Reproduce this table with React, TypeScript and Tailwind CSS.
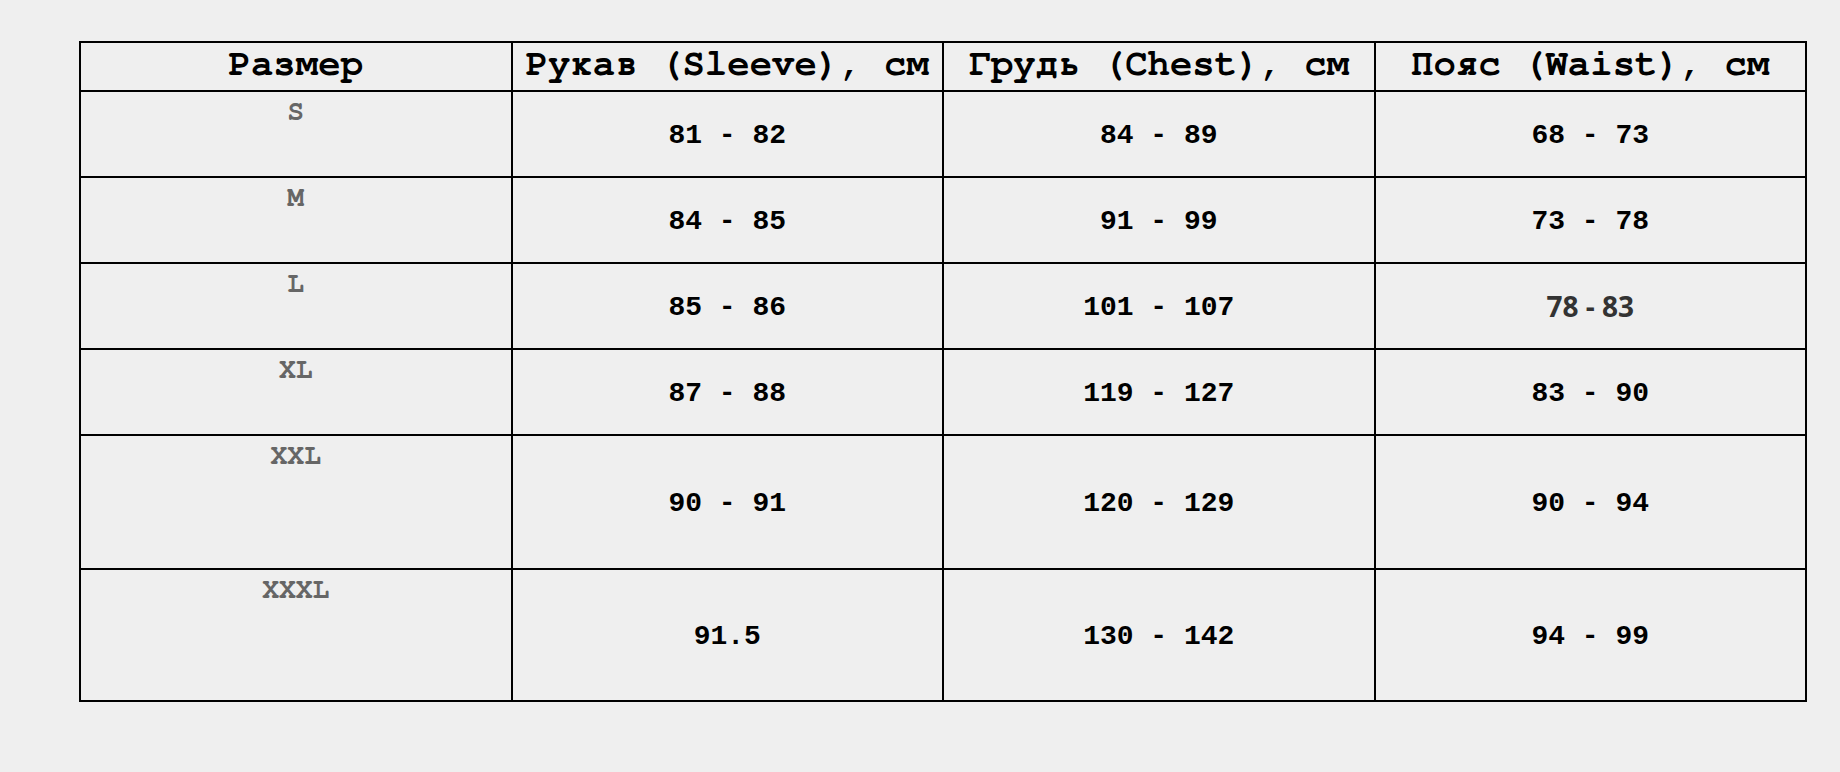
import React from "react";

const rows = [
  { size: "S", sleeve: "81 - 82", chest: "84 - 89", waist: "68 - 73", h: "h-[86px]" },
  { size: "M", sleeve: "84 - 85", chest: "91 - 99", waist: "73 - 78", h: "h-[86px]" },
  { size: "L", sleeve: "85 - 86", chest: "101 - 107", waist: "78 - 83", h: "h-[86px]", alt: true },
  { size: "XL", sleeve: "87 - 88", chest: "119 - 127", waist: "83 - 90", h: "h-[86px]" },
  { size: "XXL", sleeve: "90 - 91", chest: "120 - 129", waist: "90 - 94", h: "h-[134px]" },
  { size: "XXXL", sleeve: "91.5", chest: "130 - 142", waist: "94 - 99", h: "h-[132px]" },
];

export default function App() {
  return (
    <div className="min-h-[772px] w-[1840px] bg-[#efefef] pl-[79px] pt-[41px]">
      <table className="w-[1728px] table-fixed border-separate border-spacing-0 border border-black">
        <thead>
          <tr>
            {["Размер", "Рукав (Sleeve), см", "Грудь (Chest), см", "Пояс (Waist), см"].map((t) => (
              <th
                key={t}
                className="h-[49px] w-1/4 border border-black p-0 pb-[5px] text-center align-middle font-['FreeMono','Liberation_Mono',monospace] text-[37.33px] font-bold leading-none text-black whitespace-pre"
              >
                {t}
              </th>
            ))}
          </tr>
        </thead>
        <tbody>
          {rows.map((r) => (
            <tr key={r.size}>
              <td
                className={`${r.h} border border-black p-0 pt-[6px] text-center align-top font-['FreeMono','Liberation_Mono',monospace] text-[28px] font-bold leading-none text-[#666666]`}
              >
                {r.size}
              </td>
              <td className={`${r.h} border border-black p-0 pt-[4px] text-center align-middle font-['Liberation_Mono',monospace] text-[28px] font-bold leading-none text-black whitespace-pre`}>
                {r.sleeve}
              </td>
              <td className={`${r.h} border border-black p-0 pt-[4px] text-center align-middle font-['Liberation_Mono',monospace] text-[28px] font-bold leading-none text-black whitespace-pre`}>
                {r.chest}
              </td>
              {r.alt ? (
                <td className={`${r.h} border border-black p-0 text-center align-middle font-['Open_Sans',sans-serif] text-[28px] font-bold leading-none text-[#333333]`}>
                  {r.waist}
                </td>
              ) : (
                <td className={`${r.h} border border-black p-0 pt-[4px] text-center align-middle font-['Liberation_Mono',monospace] text-[28px] font-bold leading-none text-black whitespace-pre`}>
                  {r.waist}
                </td>
              )}
            </tr>
          ))}
        </tbody>
      </table>
    </div>
  );
}
